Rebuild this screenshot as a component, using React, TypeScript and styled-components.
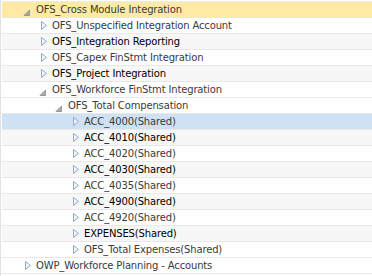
import styled, { createGlobalStyle } from "styled-components";

const Global = createGlobalStyle`
  html, body {
    margin: 0;
    padding: 0;
    background: #ffffff;
  }
  body {
    font-family: "DejaVu Sans", Verdana, sans-serif;
  }
`;

type Tone = "plain" | "gray" | "hover" | "selected";

type Node = {
  label: string;
  level: number;
  state: "open" | "closed" | "leaf";
  tone: Tone;
  dark?: boolean;
};

const nodes: Node[] = [
  { label: "OFS_Cross Module Integration", level: 0, state: "open", tone: "hover" },
  { label: "OFS_Unspecified Integration Account", level: 1, state: "closed", tone: "plain" },
  { label: "OFS_Integration Reporting", level: 1, state: "closed", tone: "gray", dark: true },
  { label: "OFS_Capex FinStmt Integration", level: 1, state: "closed", tone: "plain" },
  { label: "OFS_Project Integration", level: 1, state: "closed", tone: "gray", dark: true },
  { label: "OFS_Workforce FinStmt Integration", level: 1, state: "open", tone: "plain" },
  { label: "OFS_Total Compensation", level: 2, state: "open", tone: "plain" },
  { label: "ACC_4000(Shared)", level: 3, state: "closed", tone: "selected" },
  { label: "ACC_4010(Shared)", level: 3, state: "closed", tone: "gray", dark: true },
  { label: "ACC_4020(Shared)", level: 3, state: "closed", tone: "plain" },
  { label: "ACC_4030(Shared)", level: 3, state: "closed", tone: "gray", dark: true },
  { label: "ACC_4035(Shared)", level: 3, state: "closed", tone: "plain" },
  { label: "ACC_4900(Shared)", level: 3, state: "closed", tone: "gray", dark: true },
  { label: "ACC_4920(Shared)", level: 3, state: "closed", tone: "plain" },
  { label: "EXPENSES(Shared)", level: 3, state: "closed", tone: "gray", dark: true },
  { label: "OFS_Total Expenses(Shared)", level: 3, state: "closed", tone: "plain" },
  { label: "OWP_Workforce Planning - Accounts", level: 0, state: "closed", tone: "plain" },
];

const toneColor: Record<Tone, string> = {
  plain: "#ffffff",
  gray: "#f7f7f7",
  hover: "#feeaa4",
  selected: "#cfe2f4",
};

const Panel = styled.div`
  width: 372px;
  height: 276px;
  overflow: hidden;
  box-sizing: border-box;
  border-left: 1px solid #e2e2e2;
  padding: 1px 0 0 1px;
`;

const Tree = styled.ul`
  list-style: none;
  margin: 0;
  padding: 0;
  border-top: 1px solid #ececec;
`;

const Row = styled.li<{ $level: number; $tone: Tone }>`
  display: flex;
  align-items: center;
  height: 15px;
  border-bottom: 1px solid #e8e8e8;
  padding-left: ${(p) => 19 + p.$level * 16}px;
  background: ${(p) => toneColor[p.$tone]};
`;

const Toggle = styled.span`
  width: 12px;
  height: 15px;
  flex: none;
  display: flex;
  align-items: center;
  margin-right: 3px;
`;

const Label = styled.span<{ $dark?: boolean }>`
  font-size: 10px;
  line-height: 15px;
  white-space: nowrap;
  letter-spacing: -0.15px;
  color: ${(p) => (p.$dark ? "#000000" : "#3a3a3a")};
`;

const Closed = () => (
  <svg width="12" height="15" viewBox="0 0 12 15">
    <path d="M4.5 3.5 L9.5 7.5 L4.5 11.5 Z" fill="#eef3fa" stroke="#93abc9" strokeWidth="1" />
  </svg>
);

const Open = () => (
  <svg width="12" height="15" viewBox="0 0 12 15">
    <path d="M8.5 8 L8.5 13.5 L3 13.5 Z" fill="#a9a9a9" stroke="#8c8c8c" strokeWidth="0.8" />
  </svg>
);

export default function App() {
  return (
    <>
      <Global />
      <Panel>
        <Tree>
          {nodes.map((n) => (
            <Row key={n.label} $level={n.level} $tone={n.tone}>
              <Toggle>{n.state === "open" ? <Open /> : n.state === "closed" ? <Closed /> : null}</Toggle>
              <Label $dark={n.dark}>{n.label}</Label>
            </Row>
          ))}
        </Tree>
      </Panel>
    </>
  );
}
